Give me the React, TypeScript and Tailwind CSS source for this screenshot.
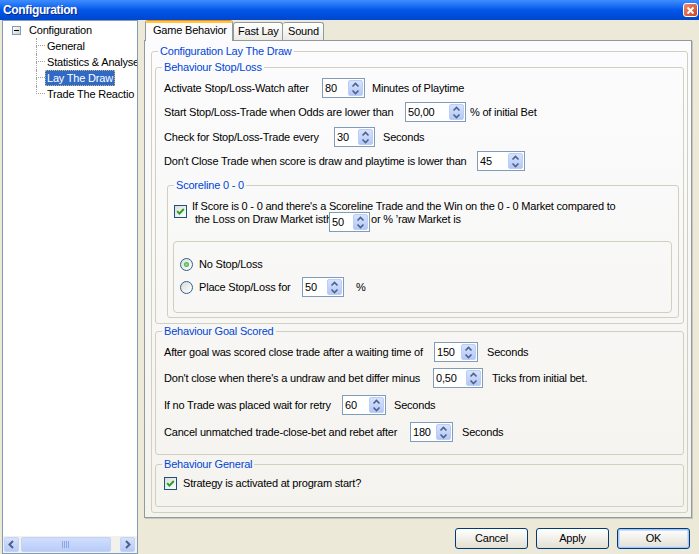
import React from "react";

function SpinArrows() {
  return (
    <div className="flex h-full w-[15px] shrink-0 items-center justify-center rounded-[2px] border border-[#bccdf6] bg-gradient-to-b from-[#d6e2fe] to-[#b4c8f6]">
      <svg width="9" height="13" viewBox="0 0 9 13">
        <path d="M1.5 4.5 L4.5 1.5 L7.5 4.5" stroke="#4d6185" strokeWidth="1.6" fill="none" />
        <path d="M1.5 8.5 L4.5 11.5 L7.5 8.5" stroke="#4d6185" strokeWidth="1.6" fill="none" />
      </svg>
    </div>
  );
}

function Spin({ value, className }: { value: string; className: string }) {
  return (
    <div className={"flex h-[20px] shrink-0 border border-[#7f9db9] bg-white p-px " + className}>
      <span className="flex-1 pl-px leading-[16px]">{value}</span>
      <SpinArrows />
    </div>
  );
}

function Check() {
  return (
    <div className="flex h-[13px] w-[13px] shrink-0 items-center justify-center border border-[#1c5180] bg-gradient-to-br from-[#dcdcd7] to-white">
      <svg width="9" height="9" viewBox="0 0 9 9">
        <path d="M1.2 4.2 L3.4 6.6 L7.8 2" stroke="#21a121" strokeWidth="1.9" fill="none" />
      </svg>
    </div>
  );
}

function Radio({ on }: { on?: boolean }) {
  return (
    <div className="flex h-[13px] w-[13px] shrink-0 items-center justify-center rounded-full border border-[#2e5f8f] bg-gradient-to-br from-[#dcdcd7] to-white">
      {on && <div className="h-[5px] w-[5px] rounded-full bg-[radial-gradient(circle,#9be09b,#21a121)]" />}
    </div>
  );
}

function Group({ title, className, children }: { title: string; className: string; children: React.ReactNode }) {
  return (
    <fieldset className={"shrink-0 rounded-[3px] border border-[#d0d0bf] " + className}>
      <legend className="ml-[6px] px-[2px] leading-[13px] text-[#0046d5]">{title}</legend>
      {children}
    </fieldset>
  );
}

function XPButton({ label, isDefault }: { label: string; isDefault?: boolean }) {
  return (
    <div
      className={
        "flex h-[21px] w-[73px] items-center justify-center rounded-[3px] border border-[#003c74] bg-gradient-to-b from-white to-[#e3e0d3] " +
        (isDefault ? "shadow-[inset_0_0_0_1px_#a9c4f2,inset_0_0_0_2px_#cfdff9]" : "")
      }
    >
      {label}
    </div>
  );
}

function ScrollBtn({ left }: { left?: boolean }) {
  return (
    <div className="flex h-[15px] w-[15px] shrink-0 items-center justify-center rounded-[2px] border border-[#c3d3f7] bg-gradient-to-b from-[#d6e2fe] to-[#b6caf7]">
      <svg width="9" height="9" viewBox="0 0 9 9">
        <path d={left ? "M6 1 L2.5 4.5 L6 8" : "M3 1 L6.5 4.5 L3 8"} stroke="#4d6185" strokeWidth="2" fill="none" />
      </svg>
    </div>
  );
}

function Tree() {
  const kids = ["General", "Statistics & Analyse", "Lay The Draw", "Trade The Reactio"];
  return (
    <div className="ml-[2px] flex h-full w-[136px] shrink-0 flex-col border border-[#7f9db9] bg-white">
      <div className="flex-1 overflow-hidden pt-px">
        <div className="flex h-[16px] items-center">
          <div className="ml-[9px] flex h-[9px] w-[9px] items-center justify-center border border-[#7b9ebd] bg-gradient-to-br from-white to-[#d4d0c4]">
            <div className="h-px w-[5px] bg-black" />
          </div>
          <span className="ml-[8px]">Configuration</span>
        </div>
        {kids.map((k, i) => (
          <div key={k} className="flex h-[16px] items-stretch pl-[33px] whitespace-nowrap">
            <div className="flex w-[9px] shrink-0 flex-col">
              <div className="h-[8px] border-b border-l border-dotted border-[#a0a0a0]" />
              {i < kids.length - 1 && <div className="h-[8px] border-l border-dotted border-[#a0a0a0]" />}
            </div>
            {k === "Lay The Draw" ? (
              <span className="border border-dotted border-[#c7b57a] bg-[#316ac5] px-px leading-[14px] text-white">{k}</span>
            ) : (
              <span className="px-[2px] leading-[16px]">{k}</span>
            )}
          </div>
        ))}
      </div>
      <div className="flex h-[17px] items-center bg-[#f2f1eb] pl-px pr-[2px]">
        <ScrollBtn left />
        <div className="ml-[2px] flex h-[15px] w-[90px] items-center justify-center rounded-[2px] border border-[#c3d3f7] bg-gradient-to-b from-[#d0ddfd] to-[#b9ccf8]">
          <svg width="8" height="7" viewBox="0 0 8 7">
            {[0, 2, 4, 6].map((x) => (
              <rect key={x} x={x} y="0" width="1" height="7" fill="#8aa6e6" />
            ))}
          </svg>
        </div>
        <div className="flex-1" />
        <ScrollBtn />
      </div>
    </div>
  );
}

function Row({
  label,
  labelClass,
  value,
  spinClass,
  suffix,
  suffixClass,
  rowClass,
}: {
  label: string;
  labelClass: string;
  value: string;
  spinClass: string;
  suffix?: string;
  suffixClass?: string;
  rowClass?: string;
}) {
  return (
    <div className={"flex h-[20px] items-center whitespace-nowrap " + (rowClass ?? "")}>
      <span className={"shrink-0 " + labelClass}>{label}</span>
      <Spin value={value} className={spinClass} />
      {suffix && <span className={suffixClass}>{suffix}</span>}
    </div>
  );
}

export default function App() {
  return (
    <div className="flex h-[554px] w-[699px] flex-col overflow-hidden bg-[#ece9d8] font-['Liberation_Sans',Arial,sans-serif] text-[11px] leading-[13px] tracking-[-0.2px] text-black">
      {/* caption */}
      <div className="flex h-[20px] shrink-0 items-center justify-between bg-gradient-to-b from-[#3d8dff] via-[#0057ea] to-[#0046cc] pl-[3px] pr-px">
        <span className="text-[12px] font-bold tracking-[-0.35px] text-white [text-shadow:1px_1px_#0a2a8a]">Configuration</span>
        <div className="flex h-[14px] w-[15px] items-center justify-center rounded-[3px] border border-white bg-gradient-to-br from-[#ec8a6e] to-[#cf401a]">
          <svg width="9" height="9" viewBox="0 0 9 9">
            <path d="M1.5 1.5 L7.5 7.5 M7.5 1.5 L1.5 7.5" stroke="white" strokeWidth="1.8" />
          </svg>
        </div>
      </div>

      <div className="flex min-h-0 flex-1">
        <Tree />

        <div className="ml-[6px] flex flex-col">
          {/* tabs */}
          <div className="flex h-[20px] items-end pl-px">
            <div className="relative z-10 -mb-px h-[21px] w-[88px] rounded-t-[3px] border-x border-t border-[#919b9c] border-t-[#e68b2c] bg-[#fcfcfe]">
              <div className="h-[2px] bg-[#ffc73c]" />
              <div className="pl-[7px] pt-px">Game Behavior</div>
            </div>
            <div className="h-[18px] w-[50px] rounded-t-[3px] border-x border-t border-[#919b9c] bg-gradient-to-b from-white to-[#ecebe5] pl-[4px] pt-[2px]">
              Fast Lay
            </div>
            <div className="h-[18px] w-[41px] rounded-t-[3px] border-r border-t border-[#919b9c] bg-gradient-to-b from-white to-[#ecebe5] pl-[5px] pt-[2px]">
              Sound
            </div>
          </div>

          {/* page */}
          <div className="h-[478px] w-[548px] border border-[#919b9c] bg-gradient-to-b from-[#fcfcfe] to-[#f4f3ee] pl-[6px] pt-[4px] shadow-[1px_1px_0_#c9c7ba]">
            <Group title="Configuration Lay The Draw" className="h-[468px] w-[537px]">
              <div className="flex flex-col pl-[3px] pt-[3px]">
                <Group title="Behaviour Stop/Loss" className="h-[263px] w-[529px]">
                  <div className="flex flex-col pl-[8px] pt-[4px]">
                    <Row
                      label="Activate Stop/Loss-Watch after"
                      labelClass="w-[158px]"
                      value="80"
                      spinClass="w-[43px]"
                      suffix="Minutes of Playtime"
                      suffixClass="ml-[7px]"
                    />
                    <Row
                      rowClass="mt-[4px]"
                      label="Start Stop/Loss-Trade when Odds are lower than"
                      labelClass="w-[241px]"
                      value="50,00"
                      spinClass="w-[61px]"
                      suffix="% of initial Bet"
                      suffixClass="ml-[4px]"
                    />
                    <Row
                      rowClass="mt-[5px]"
                      label="Check for Stop/Loss-Trade every"
                      labelClass="w-[170px]"
                      value="30"
                      spinClass="w-[41px]"
                      suffix="Seconds"
                      suffixClass="ml-[8px]"
                    />
                    <Row
                      rowClass="mt-[4px]"
                      label="Don't Close Trade when score is draw and playtime is lower than"
                      labelClass="w-[313px]"
                      value="45"
                      spinClass="w-[48px]"
                    />

                    <Group title="Scoreline 0 - 0" className="ml-[3px] mt-[8px] h-[139px] w-[512px]">
                      <div className="flex flex-col">
                        <div className="mt-[8px] flex items-start pl-[6px]">
                          <div className="mt-[5px]">
                            <Check />
                          </div>
                          <div className="ml-[5px] flex flex-col whitespace-nowrap">
                            <span>If Score is 0 - 0 and there's a Scoreline Trade and the Win on the 0 - 0 Market compared to</span>
                            <div className="flex items-start">
                              <span className="w-[137px] shrink-0 overflow-hidden pl-[3px]">the Loss on Draw Market isthigher</span>
                              <Spin value="50" className="-mt-px w-[41px]" />
                              <span className="ml-px">or % ʼraw Market is</span>
                            </div>
                          </div>
                        </div>
                        <div className="ml-[5px] mt-[9px] h-[72px] w-[499px] rounded-[4px] border border-[#d0d0bf] pl-[6px] pt-[16px]">
                          <div className="flex h-[13px] items-center">
                            <Radio on />
                            <span className="ml-[6px]">No Stop/Loss</span>
                          </div>
                          <div className="mt-[6px] flex h-[20px] items-center">
                            <Radio />
                            <span className="ml-[6px] w-[103px]">Place Stop/Loss for</span>
                            <Spin value="50" className="w-[42px]" />
                            <span className="ml-[12px]">%</span>
                          </div>
                        </div>
                      </div>
                    </Group>
                  </div>
                </Group>

                <Group title="Behaviour Goal Scored" className="mt-px h-[130px] w-[529px]">
                  <div className="flex flex-col pl-[8px] pt-[4px]">
                    <Row
                      label="After goal was scored close trade after a waiting time of"
                      labelClass="w-[270px]"
                      value="150"
                      spinClass="w-[44px]"
                      suffix="Seconds"
                      suffixClass="ml-[9px]"
                    />
                    <Row
                      rowClass="mt-[6px]"
                      label="Don't close when there's a undraw and bet differ minus"
                      labelClass="w-[269px]"
                      value="0,50"
                      spinClass="w-[50px]"
                      suffix="Ticks from initial bet."
                      suffixClass="ml-[9px]"
                    />
                    <Row
                      rowClass="mt-[7px]"
                      label="If no Trade was placed wait for retry"
                      labelClass="w-[178px]"
                      value="60"
                      spinClass="w-[44px]"
                      suffix="Seconds"
                      suffixClass="ml-[8px]"
                    />
                    <Row
                      rowClass="mt-[7px]"
                      label="Cancel unmatched trade-close-bet and rebet after"
                      labelClass="w-[246px]"
                      value="180"
                      spinClass="w-[43px]"
                      suffix="Seconds"
                      suffixClass="ml-[9px]"
                    />
                  </div>
                </Group>

                <Group title="Behaviour General" className="mt-[3px] h-[49px] w-[529px]">
                  <div className="mt-[6px] flex h-[13px] items-center pl-[8px]">
                    <Check />
                    <span className="ml-[6px]">Strategy is activated at program start?</span>
                  </div>
                </Group>
              </div>
            </Group>
          </div>

          {/* buttons */}
          <div className="mt-[10px] flex w-[548px] justify-end gap-[8px] pr-[2px]">
            <XPButton label="Cancel" />
            <XPButton label="Apply" />
            <XPButton label="OK" isDefault />
          </div>
        </div>
      </div>
    </div>
  );
}
